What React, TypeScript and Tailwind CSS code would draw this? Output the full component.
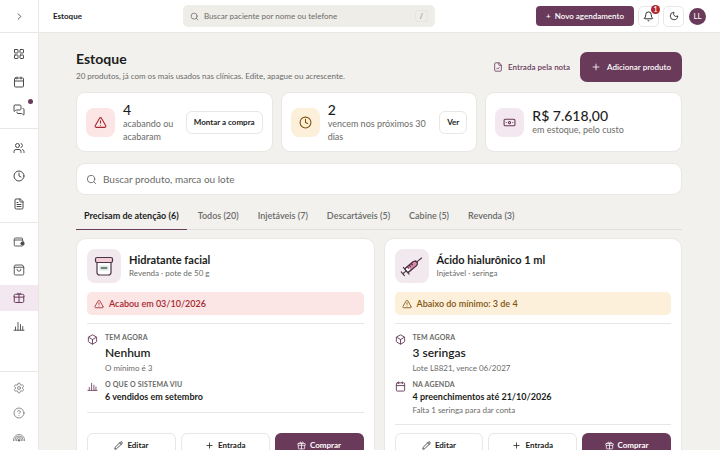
import { ComponentType, ReactNode } from "react";
import {
  Banknote,
  Bell,
  Box,
  Calendar,
  ChevronRight,
  CircleHelp,
  Clock,
  FileCheck,
  FileText,
  LayoutGrid,
  MessagesSquare,
  Moon,
  Pencil,
  Plus,
  Search,
  Settings,
  TriangleAlert,
  Users,
} from "lucide-react";

type Icon = ComponentType<{ className?: string }>;

interface NavItem {
  label: string;
  icon: Icon;
  active?: boolean;
  dot?: boolean;
}

const WalletIcon: Icon = ({ className }) => (
  <svg viewBox="0 0 24 24" className={className} fill="none" stroke="currentColor" strokeWidth="1.800" strokeLinecap="round" strokeLinejoin="round">
    <path d="M2.500 8V6.500A2.500 2.500 0 0 1 5 4h12a2 2 0 0 1 2 2v2" />
    <path d="M20 12v-2a2 2 0 0 0-2-2H2.500v9.500A2.500 2.500 0 0 0 5 20h13a2 2 0 0 0 2-2" />
    <path d="M18 12.500h4v5h-4a2.500 2.500 0 0 1 0-5z" fill="currentColor" />
  </svg>
);

const BagIcon: Icon = ({ className }) => (
  <svg viewBox="0 0 24 24" className={className} fill="none" stroke="currentColor" strokeWidth="1.800" strokeLinecap="round" strokeLinejoin="round">
    <path d="M5 2h14l2.500 4v13.500a2.500 2.500 0 0 1-2.500 2.500H5a2.500 2.500 0 0 1-2.500-2.500V6zM2.500 6.500h19" />
    <path d="M16 10.500a4 4 0 0 1-8 0" />
  </svg>
);

const ParcelIcon: Icon = ({ className }) => (
  <svg viewBox="0 0 24 24" className={className} fill="none" stroke="currentColor" strokeWidth="2" strokeLinecap="round" strokeLinejoin="round">
    <path d="M2 9.500V7.500a3 3 0 0 1 3-3h14a3 3 0 0 1 3 3v2zM2.500 9.500v9A2.500 2.500 0 0 0 5 21h14a2.500 2.500 0 0 0 2.500-2.500v-9M12 4.500V21" />
    <path d="M9 2.500c1.500 0 2.500.8 3 2 .5-1.200 1.500-2 3-2" />
  </svg>
);

const GiftIcon: Icon = ({ className }) => (
  <svg viewBox="0 0 24 24" className={className} fill="none" stroke="currentColor" strokeWidth="2" strokeLinecap="round" strokeLinejoin="round">
    <rect x="2" y="6.500" width="20" height="5" rx="1.500" />
    <path d="M3.500 11.500V19a2 2 0 0 0 2 2h13a2 2 0 0 0 2-2v-7.500M12 6.500V21" />
    <path d="M12 6.500C11 3.500 9.500 2.500 8.200 3s-1.200 2.800 0 3.500M12 6.500c1-3 2.500-4 3.800-3.500s1.200 2.800 0 3.500" />
  </svg>
);

const BarsIcon: Icon = ({ className }) => (
  <svg viewBox="0 0 24 24" className={className} fill="none" stroke="currentColor" strokeWidth="1.800" strokeLinecap="round">
    <path d="M2 20.500h20M5 20v-6M10 20V5M15 20V9M19.500 20v-7" />
  </svg>
);

const ArcsIcon: Icon = ({ className }) => (
  <svg viewBox="0 0 24 24" className={className} fill="none" stroke="currentColor" strokeWidth="1.400">
    <path d="M1 16a11 11 0 0 1 22 0M4 16a8 8 0 0 1 16 0M7 16a5 5 0 0 1 10 0M10 16a2 2 0 0 1 4 0M1 16v2M4 16v2M7 16v2M17 16v2M20 16v2M23 16v2" />
    <path d="M10 16h4v2h-4z" fill="currentColor" />
  </svg>
);

const JarIcon = () => (
  <svg viewBox="0 0 24 24" className="size-6" fill="none" stroke="#4a3444" strokeWidth="1.200" strokeLinejoin="round">
    <path d="M5 8h14v10.500a2.500 2.500 0 0 1-2.500 2.500h-9A2.500 2.500 0 0 1 5 18.500z" fill="#fff" />
    <rect x="3.500" y="3.500" width="17" height="5" rx="1.500" fill="#f3cdd8" />
    <rect x="7.500" y="11.500" width="9" height="5" rx="0.500" fill="#d3ebe2" stroke="none" />
    <path d="M8.800 14h6.400" strokeWidth="1.200" />
  </svg>
);

const SyringeIcon = () => (
  <svg viewBox="0 0 24 24" className="size-6" fill="none" stroke="#4a3444" strokeWidth="1.100" strokeLinecap="round" strokeLinejoin="round">
    <g transform="rotate(-40 12 12)">
      <path d="M4.500 9.500h11.500l2 1.200v2.600l-2 1.200H4.500z" fill="#fff" />
      <path d="M8.500 9.500H16l2 1.200v2.600l-2 1.200H8.500z" fill="#dc8aab" stroke="none" />
      <path d="M4.500 9.500h11.500l2 1.200v2.600l-2 1.200H4.500zM18 12h6.500M4.500 7.500v9M0 12h4.500M0 9.500v5M8 9.500v2M10.500 9.500v2M13 9.500v2" />
    </g>
  </svg>
);

const navGroups: NavItem[][] = [
  [
    { label: "Painel", icon: LayoutGrid },
    { label: "Agenda", icon: Calendar },
    { label: "Conversas", icon: MessagesSquare, dot: true },
  ],
  [
    { label: "Pacientes", icon: Users },
    { label: "Retornos", icon: Clock },
    { label: "Documentos", icon: FileText },
  ],
  [
    { label: "Financeiro", icon: WalletIcon },
    { label: "Vendas", icon: BagIcon },
    { label: "Estoque", icon: ParcelIcon, active: true },
    { label: "Relatórios", icon: BarsIcon },
  ],
];

const tabs = [
  "Precisam de atenção (6)",
  "Todos (20)",
  "Injetáveis (7)",
  "Descartáveis (5)",
  "Cabine (5)",
  "Revenda (3)",
];

interface Fact {
  icon: Icon;
  label: string;
  value: string;
  note?: string;
  big?: boolean;
}

interface Product {
  name: string;
  kind: string;
  picture: ReactNode;
  alert: string;
  alertClass: string;
  facts: Fact[];
}

const products: Product[] = [
  {
    name: "Hidratante facial",
    kind: "Revenda · pote de 50 g",
    picture: <JarIcon />,
    alert: "Acabou em 03/10/2026",
    alertClass: "bg-[#fbe5e5] text-[#a5282f]",
    facts: [
      { icon: Box, label: "TEM AGORA", value: "Nenhum", note: "O mínimo é 3", big: true },
      { icon: BarsIcon, label: "O QUE O SISTEMA VIU", value: "6 vendidos em setembro" },
    ],
  },
  {
    name: "Ácido hialurônico 1 ml",
    kind: "Injetável · seringa",
    picture: <SyringeIcon />,
    alert: "Abaixo do mínimo: 3 de 4",
    alertClass: "bg-[#fcf0da] text-[#80530f]",
    facts: [
      { icon: Box, label: "TEM AGORA", value: "3 seringas", note: "Lote L8821, vence 06/2027", big: true },
      {
        icon: Calendar,
        label: "NA AGENDA",
        value: "4 preenchimentos até 21/10/2026",
        note: "Falta 1 seringa para dar conta",
      },
    ],
  },
];

const Sidebar = () => (
  <aside className="flex w-[39px] shrink-0 flex-col border-r border-[#e9e7e4] bg-white text-[#4a4a48]">
    <button aria-label="Expandir menu" className="flex h-[33px] shrink-0 items-center justify-center border-b border-[#e9e7e4]">
      <ChevronRight className="size-[11px]" />
    </button>
    <nav className="flex flex-col">
      {navGroups.map((group, index) => (
        <div key={index} className="flex flex-col gap-[2px] border-[#e9e7e4] pt-[6px] pb-[5px] not-last:border-b first:pt-2">
          {group.map(({ label, icon: Icon, active, dot }) => (
            <a
              key={label}
              href="#"
              aria-label={label}
              className={`relative flex h-[26px] items-center justify-center ${active ? "bg-[#f3e8ef] text-[#6a3a5a]" : ""}`}
            >
              <Icon className="size-3" />
              {dot && <span className="absolute top-[2px] right-[5px] size-[5px] rounded-full bg-[#6a3a5a]" />}
            </a>
          ))}
        </div>
      ))}
    </nav>
    <div className="mt-auto flex h-[79px] flex-col items-center gap-[13px] border-t border-[#e9e7e4] pt-[10px] text-[#6b6b68]">
      <a href="#" aria-label="Configurações">
        <Settings className="size-3" strokeWidth={1.5} />
      </a>
      <a href="#" aria-label="Ajuda">
        <CircleHelp className="size-3" strokeWidth={1.5} />
      </a>
      <a href="#" aria-label="Sobre">
        <ArcsIcon className="size-3" />
      </a>
    </div>
  </aside>
);

const Header = () => (
  <header className="flex h-[33px] shrink-0 items-center border-b border-[#e9e7e4] bg-white px-[14px]">
    <span className="w-[130px] text-[8px] font-bold">Estoque</span>
    <label className="flex h-[22px] w-[252px] items-center gap-[5px] rounded-[5px] bg-[#efede8] px-[7px] text-[#6b6b68]">
      <Search className="size-[9px]" />
      <input
        aria-label="Buscar paciente"
        placeholder="Buscar paciente por nome ou telefone"
        className="min-w-0 flex-1 text-[8px] outline-none placeholder:text-[#6b6b68]"
      />
      <kbd className="rounded-[3px] border border-[#e7e5e2] px-1 font-[inherit] text-[7px] leading-[10px]">/</kbd>
    </label>
    <div className="ml-auto flex items-center gap-1">
      <button className="flex h-5 items-center gap-1 rounded-[4px] bg-[#6a3a5a] px-[10px] text-[8px] font-semibold text-white">
        <span>+</span>
        Novo agendamento
      </button>
      <button aria-label="Notificações" className="relative flex size-[21px] items-center justify-center rounded-[5px] border border-[#e9e7e4]">
        <Bell className="size-[11px]" />
        <span className="absolute -top-[2px] -right-[2px] flex size-[9px] items-center justify-center rounded-full bg-[#b3262e] text-[7px] font-semibold text-white">
          1
        </span>
      </button>
      <button aria-label="Tema escuro" className="flex size-[21px] items-center justify-center rounded-[5px] border border-[#e9e7e4]">
        <Moon className="size-[10px]" />
      </button>
      <button className="ml-[1px] flex size-[17px] items-center justify-center rounded-full bg-[#6a3a5a] text-[8px] text-white">
        LL
      </button>
    </div>
  </header>
);

interface StatCardProps {
  icon: Icon;
  iconClass: string;
  value: string;
  text: string;
  action?: string;
}

const StatCard = ({ icon: Icon, iconClass, value, text, action }: StatCardProps) => (
  <section className="flex h-[60px] items-center gap-2 rounded-[9px] border border-[#e9e7e4] bg-white px-[9px]">
    <div className={`flex size-[29px] shrink-0 items-center justify-center rounded-[8px] ${iconClass}`}>
      <Icon className="size-[13px]" />
    </div>
    <div className="min-w-0 flex-1">
      <p className="text-[14px] leading-[15px] font-medium">{value}</p>
      <p className="text-[9px] leading-[13px] text-[#6b6b68]">{text}</p>
    </div>
    {action && (
      <button className="h-[23px] shrink-0 rounded-[6px] border border-[#e9e7e4] px-[7px] text-[8px] font-bold">
        {action}
      </button>
    )}
  </section>
);

const ProductCard = ({ name, kind, picture, alert, alertClass, facts }: Product) => (
  <article className="flex flex-col rounded-[10px] border border-[#e9e7e4] bg-white p-[10px]">
    <div className="flex items-center gap-2">
      <div className="flex size-[34px] items-center justify-center rounded-[8px] bg-[#f2e9ee]">{picture}</div>
      <div>
        <h2 className="text-[11px] leading-[14px] font-bold">{name}</h2>
        <p className="text-[8px] leading-[13px] text-[#6b6b68]">{kind}</p>
      </div>
    </div>
    <p className={`mt-[9px] flex h-[23px] items-center gap-[5px] rounded-[5px] px-[7px] text-[9px] font-semibold ${alertClass}`}>
      <TriangleAlert className="size-[10px]" />
      {alert}
    </p>
    <div className="mt-2 mb-2 flex flex-col gap-[5px] border-y border-[#e9e7e4] pt-2 pb-2">
      {facts.map(({ icon: Icon, label, value, note, big }) => (
        <div key={label} className="flex gap-[7px]">
          <Icon className="mt-[2px] size-[11px] text-[#6a3a5a]" />
          <div>
            <p className="text-[7px] leading-[11px] font-bold tracking-wide text-[#6b6b68]">{label}</p>
            <p className={big ? "text-[12px] leading-[19px] font-semibold" : "text-[9px] leading-[14px] font-bold"}>{value}</p>
            {note && <p className="text-[8px] leading-[12px] text-[#6b6b68]">{note}</p>}
          </div>
        </div>
      ))}
    </div>
    <div className="mt-auto grid grid-cols-3 gap-[5px] text-[8px] leading-[10px] font-bold">
      <button className="flex h-6 items-center justify-center gap-1 rounded-[6px] border border-[#e9e7e4]">
        <Pencil className="size-[9px]" />
        Editar
      </button>
      <button className="flex h-6 items-center justify-center gap-1 rounded-[6px] border border-[#e9e7e4]">
        <Plus className="size-[9px]" />
        Entrada
      </button>
      <button className="flex h-6 items-center justify-center gap-1 rounded-[6px] bg-[#6a3a5a] text-white">
        <GiftIcon className="size-[9px]" />
        Comprar
      </button>
    </div>
  </article>
);

export default function App() {
  return (
    <div className="flex h-screen bg-[#f2f1ee] font-['Lato',sans-serif] text-[#1c1d1b]">
      <Sidebar />
      <div className="flex min-w-0 flex-1 flex-col">
        <Header />
        <main className="flex-1 overflow-y-auto pt-[18px] pr-[38px] pb-8 pl-[37px] [scrollbar-width:none]">
          <div className="flex items-center justify-between">
            <div>
              <h1 className="text-[14px] leading-[16px] font-bold">Estoque</h1>
              <p className="mt-[3px] text-[8px] leading-[12px] text-[#6b6b68]">
                20 produtos, já com os mais usados nas clínicas. Edite, apague ou acrescente.
              </p>
            </div>
            <div className="flex items-center gap-[10px] text-[8px] font-semibold">
              <button className="flex items-center gap-[5px] text-[#6a3a5a]">
                <FileCheck className="size-[10px]" />
                Entrada pela nota
              </button>
              <button className="flex h-[30px] items-center gap-[6px] rounded-[7px] bg-[#6a3a5a] px-[11px] text-white">
                <Plus className="size-[10px]" />
                Adicionar produto
              </button>
            </div>
          </div>

          <div className="mt-[10px] grid grid-cols-3 gap-2">
            <StatCard
              icon={TriangleAlert}
              iconClass="bg-[#fbe5e5] text-[#a5282f]"
              value="4"
              text="acabando ou acabaram"
              action="Montar a compra"
            />
            <StatCard
              icon={Clock}
              iconClass="bg-[#fcf0da] text-[#80530f]"
              value="2"
              text="vencem nos próximos 30 dias"
              action="Ver"
            />
            <StatCard
              icon={Banknote}
              iconClass="bg-[#f3e8ef] text-[#6a3a5a]"
              value="R$ 7.618,00"
              text="em estoque, pelo custo"
            />
          </div>

          <label className="mt-[11px] flex h-8 items-center gap-[6px] rounded-[9px] border border-[#e9e7e4] bg-white px-[9px] text-[#6b6b68]">
            <Search className="size-[11px]" />
            <input
              aria-label="Buscar produto"
              placeholder="Buscar produto, marca ou lote"
              className="flex-1 text-[10px] outline-none placeholder:text-[#6b6b68]"
            />
          </label>

          <div role="tablist" className="mt-2 flex gap-[3px] border-b border-[#e2e0dc]">
            {tabs.map((tab, index) => (
              <button
                key={tab}
                role="tab"
                aria-selected={index === 0}
                className={`-mb-px h-[27px] border-b px-2 text-[9px] ${
                  index === 0 ? "border-[#6a3a5a] font-bold" : "border-transparent font-semibold text-[#6b6b68]"
                }`}
              >
                {tab}
              </button>
            ))}
          </div>

          <div className="mt-2 grid grid-cols-2 gap-[9px]">
            {products.map((product) => (
              <ProductCard key={product.name} {...product} />
            ))}
          </div>
        </main>
      </div>
    </div>
  );
}
